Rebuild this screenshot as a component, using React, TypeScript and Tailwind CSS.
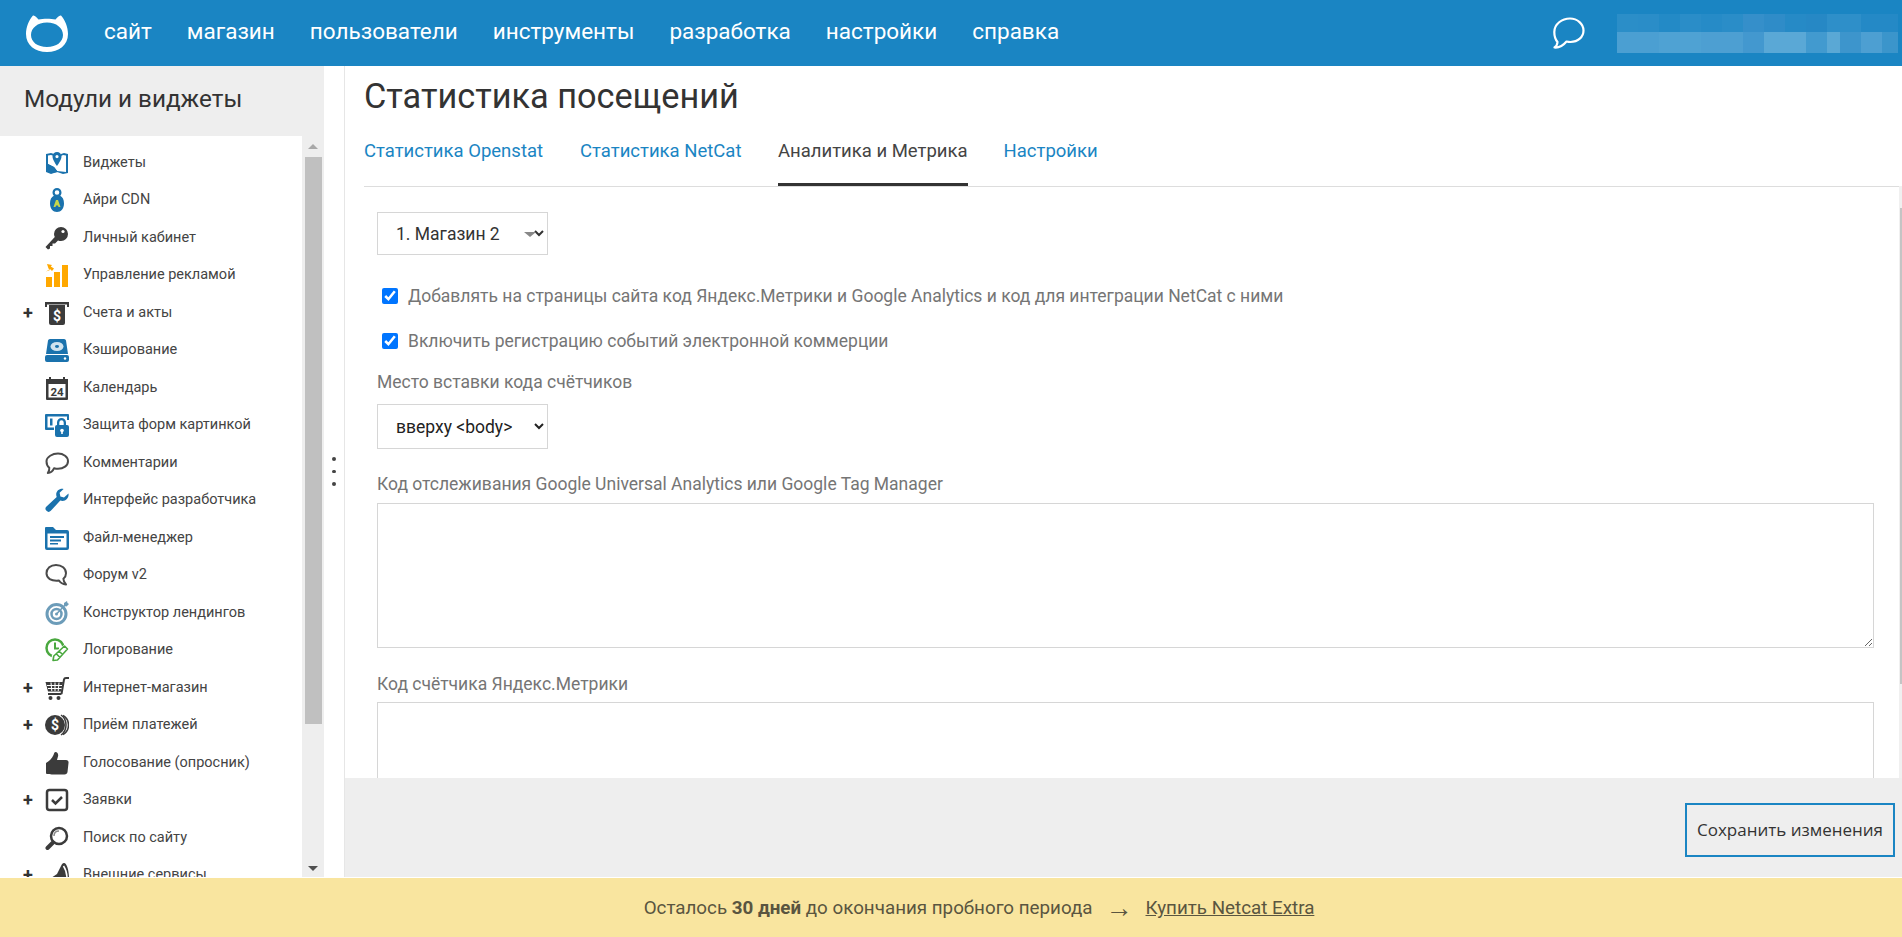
import type { ReactNode } from "react";

const BLUE = "#1a72ad";
const DARK = "#3b3b3b";

function Svg({ children }: { children: ReactNode }) {
  return (
    <svg viewBox="0 0 24 24" className="h-6 w-6 shrink-0">
      {children}
    </svg>
  );
}

const icons: Record<string, ReactNode> = {
  map: (
    <Svg>
      <path fill={BLUE} fillRule="evenodd" d="M1 3l5-1 3 1v2L6 4 3 4.600V13l6 3 3 4 9 1V4.600L18 4l-2 1V3l3-1 4 1v19l-5 1-6-2-6 2-5-2Z" />
      <path fill={BLUE} d="M3 13l6 3 4 5-6 1-4-2Z" />
      <path fill={BLUE} fillRule="evenodd" d="M12 1a4.500 4.500 0 0 1 4.500 4.500C16.500 9 12 15 12 15S7.500 9 7.500 5.500A4.500 4.500 0 0 1 12 1Zm0 3a1.600 1.600 0 1 0 0 3.200A1.600 1.600 0 0 0 12 4Z" />
    </Svg>
  ),
  lock: (
    <Svg>
      <path fill={BLUE} fillRule="evenodd" d="M12 0a4.500 4.500 0 0 1 4.500 4.500c0 1.300-.5 2.500-1.300 3.300C17.600 9 19 11.500 19 15.500c0 5-3 8.500-7 8.500s-7-3.500-7-8.500c0-4 1.400-6.500 3.800-7.700a4.500 4.500 0 0 1-1.300-3.300A4.500 4.500 0 0 1 12 0Zm0 2.200a2.300 2.300 0 0 0 0 4.600 2.300 2.300 0 0 0 0-4.600Z" />
      <path fill="#c9d84a" d="M11 12h2l2.500 7h-2l-.5-1.500h-2L10.500 19h-2Z" />
    </Svg>
  ),
  key: (
    <Svg>
      <path fill={DARK} d="M16 1a7 7 0 0 1 0 14c-1 0-2-.2-3-.6L10 17.500H7.500V20H5v2.500l-2 1L.5 21 9.800 11c-.5-1-.8-2-.8-3a7 7 0 0 1 7-7Z" />
      <circle cx="18" cy="5.500" r="1.600" fill="#fff" />
    </Svg>
  ),
  bars: (
    <Svg>
      <path fill="#ffa800" d="M1 14h6v10H1ZM9 9h6v15H9ZM17 2h6v22h-6Z" />
      <path fill="#ffa800" d="M1 8.500 5 7 3.500 5.500 2 1l5 1-1.200 1.400L9 5.500 7 8 5 6Z" />
    </Svg>
  ),
  invoice: (
    <Svg>
      <path fill={DARK} d="M0 1h24v5h-2V3.500H2V6H0Z" />
      <path fill={DARK} d="M4 4h16v18a2 2 0 0 1-2 2H6a2 2 0 0 1-2-2Z" />
      <text x="12" y="20" textAnchor="middle" fontSize="14" fontWeight="700" fontFamily="Roboto, sans-serif" fill="#fff">$</text>
    </Svg>
  ),
  disk: (
    <Svg>
      <path fill={BLUE} d="M5 1h14a2 2 0 0 1 2 1.600L23 16H1L3 2.600A2 2 0 0 1 5 1ZM2 17h20a2 2 0 0 1 2 2v3a2 2 0 0 1-2 2H2a2 2 0 0 1-2-2v-3a2 2 0 0 1 2-2Z" />
      <ellipse cx="12" cy="8.500" rx="6.500" ry="4.500" fill="#cfe3ef" />
      <ellipse cx="12" cy="8.500" rx="2" ry="1.400" fill={BLUE} />
      <circle cx="20" cy="20.500" r="1.200" fill="#fff" />
    </Svg>
  ),
  calendar: (
    <Svg>
      <path fill={DARK} fillRule="evenodd" d="M1 3h3V1h2v2h12V1h2v2h3v20a1 1 0 0 1-1 1H2a1 1 0 0 1-1-1ZM3.500 8v13.500h17V8Z" />
      <text x="12" y="19.500" textAnchor="middle" fontSize="11.500" fontWeight="700" fontFamily="Roboto, sans-serif" fill={DARK}>24</text>
    </Svg>
  ),
  captcha: (
    <Svg>
      <path fill={BLUE} fillRule="evenodd" d="M1 1h22a1 1 0 0 1 1 1v5h-2V3.500H2.500v11H9V17H1a1 1 0 0 1-1-1V2a1 1 0 0 1 1-1Z" />
      <path fill={BLUE} d="M5 5.500h2.500v7H5Z" />
      <path fill={BLUE} fillRule="evenodd" d="M16.500 5A4.500 4.500 0 0 1 21 9.500V12h-2.300V9.500a2.200 2.200 0 0 0-4.400 0V12H22a2 2 0 0 1 2 2v8a2 2 0 0 1-2 2H12a2 2 0 0 1-2-2v-8a2 2 0 0 1 2-2V9.500A4.500 4.500 0 0 1 16.500 5Z" />
      <circle cx="17" cy="17.500" r="1.800" fill="#fff" />
      <path fill="#fff" d="M16.200 18h1.600v3h-1.600Z" />
    </Svg>
  ),
  comment: (
    <Svg>
      <path fill="none" stroke="#4a4a4a" strokeWidth="2" strokeLinejoin="round" d="M13 2.500c5.500 0 10 3.400 10 7.700s-4.500 7.600-10 7.600c-1.400 0-2.700-.2-3.900-.6C8 19.800 5.500 22 2.800 22c1.200-1.500 1.700-3.300 1.500-5.300C2.300 15.200 1.500 12.700 1.500 10.200 1.500 5.900 7.500 2.500 13 2.500Z" />
    </Svg>
  ),
  wrench: (
    <Svg>
      <path fill={BLUE} d="M23.500 5.500c.6 3.800-2 7.500-6 7.500-.8 0-1.500-.1-2.200-.4L5.800 22.800a3 3 0 0 1-4.300 0 3 3 0 0 1 0-4.300L11.700 9c-.3-.7-.5-1.500-.5-2.400 0-4 3.700-6.400 7.400-5.600l-4 3.700.8 3.800 3.600.9Z" />
    </Svg>
  ),
  folder: (
    <Svg>
      <path fill={BLUE} fillRule="evenodd" d="M1 1h7l3 3h11a2 2 0 0 1 2 2v16a2 2 0 0 1-2 2H2a2 2 0 0 1-2-2V2a1 1 0 0 1 1-1Zm1.500 6.500V21.500h19V7.500Z" />
      <path fill={BLUE} d="M5 10h14v2H5ZM5 13.500h11v2H5ZM5 17h8v1.500H5Z" />
    </Svg>
  ),
  forum: (
    <Svg>
      <path fill="none" stroke="#4a4a4a" strokeWidth="2" strokeLinejoin="round" d="M11 2c5.700 0 10 3.500 10 8.300 0 2.400-1 4.200-2.600 5.500 0 1.800.8 3.700 2.600 5.700-3-.3-5.600-1.800-7-4C6 18.300 1.500 15.200 1.500 10.300 1.500 5.500 5.500 2 11 2Z" />
    </Svg>
  ),
  target: (
    <Svg>
      <circle cx="11.500" cy="13" r="9.500" fill="none" stroke="#6c9cb9" strokeWidth="3" />
      <circle cx="11.500" cy="13" r="5" fill="none" stroke="#6c9cb9" strokeWidth="2.500" />
      <circle cx="11.500" cy="13" r="1.500" fill="#6c9cb9" />
      <path stroke="#6c9cb9" strokeWidth="1.500" d="M12 12.500 21 3" />
      <path fill="#6c9cb9" d="M19 2l3-2 .5 2L24 3l-2.500 2.500L19 5Z" />
    </Svg>
  ),
  log: (
    <Svg>
      <circle cx="10" cy="10" r="8.500" fill="none" stroke="#4aa83f" strokeWidth="2.500" />
      <path fill="none" stroke="#4aa83f" strokeWidth="2" d="M10 4.500V10.500H14" />
      <path fill="#fff" d="M20 6l4 4-12 14-6-1 1-6Z" />
      <path fill="none" stroke="#4aa83f" strokeWidth="1.600" strokeLinejoin="round" d="M19.500 8l3 3-10 11-4.500.5.800-4.500ZM11 15.500l4 4M14 13l3.500 3.500" />
    </Svg>
  ),
  cart: (
    <Svg>
      <path fill={DARK} d="M.5 6h17.500l-2 9.500H3Zm2.500 11h13.500v2H3Z" />
      <path stroke={DARK} strokeWidth="2" fill="none" d="M16.500 18 19 3.500c.2-1 1-1.500 2-1.500h3" />
      <path stroke="#fff" strokeWidth="1" d="M6 6.500l.8 8.500M10 6.500V15M14 6.500l-.8 8.500M2 9.500h15M3 12.500h13.500" />
      <circle cx="5.500" cy="22" r="2" fill={DARK} />
      <circle cx="13.500" cy="22" r="2" fill={DARK} />
    </Svg>
  ),
  payment: (
    <Svg>
      <path fill="none" stroke={DARK} strokeWidth="1.500" d="M18 2.500c3.500 2 5.500 5.500 5.500 9.500s-2 7.500-5.500 9.500" />
      <path fill="none" stroke={DARK} strokeWidth="1.500" d="M16 2c3 2 5 5.500 5 10s-2 8-5 10" />
      <circle cx="10" cy="12" r="10" fill={DARK} />
      <text x="10" y="17" textAnchor="middle" fontSize="14" fontWeight="700" fontFamily="Roboto, sans-serif" fill="#fff">$</text>
    </Svg>
  ),
  thumb: (
    <Svg>
      <path fill={DARK} d="M1 12c3-1.500 6-4.500 7.500-8 .5-1.500.8-3 2-3 2 0 3 2 2.600 4L12 9h9c2 0 2.800 1.500 2.500 3l-1 9c-.2 1.500-1.300 2.500-3 2.500H8c-2 0-3-.5-4.500-.5H2a1 1 0 0 1-1-1Z" />
    </Svg>
  ),
  check: (
    <Svg>
      <rect x="2" y="2" width="20" height="20" rx="2.500" fill="none" stroke={DARK} strokeWidth="2.500" />
      <path fill="none" stroke={DARK} strokeWidth="2.500" d="M7 12l3.500 3.500L17 9" />
    </Svg>
  ),
  search: (
    <Svg>
      <circle cx="14" cy="10" r="8" fill="none" stroke={DARK} strokeWidth="2.500" />
      <path fill="none" stroke="#8a8a8a" strokeWidth="1.500" d="M9 10c0-3 2-5 5-5" />
      <path stroke={DARK} strokeWidth="4" strokeLinecap="round" d="M8 16.500 2.500 22" />
    </Svg>
  ),
  megaphone: (
    <Svg>
      <path fill={DARK} d="M0 19 12 11l4-8c.6-1.500 1.500-3 3-3 3 0 5 8 5 15 0 4-.5 8-1.500 9H4l-2-1Z" />
      <path fill="none" stroke="#fff" strokeWidth="1.500" d="M18.500 3c2 3 3.500 7.500 3.500 12 0 1.500-.2 3-.6 4" />
    </Svg>
  ),
};

const modules = [
  { title: "Виджеты", icon: "map" },
  { title: "Айри CDN", icon: "lock" },
  { title: "Личный кабинет", icon: "key" },
  { title: "Управление рекламой", icon: "bars" },
  { title: "Счета и акты", icon: "invoice", plus: true },
  { title: "Кэширование", icon: "disk" },
  { title: "Календарь", icon: "calendar" },
  { title: "Защита форм картинкой", icon: "captcha" },
  { title: "Комментарии", icon: "comment" },
  { title: "Интерфейс разработчика", icon: "wrench" },
  { title: "Файл-менеджер", icon: "folder" },
  { title: "Форум v2", icon: "forum" },
  { title: "Конструктор лендингов", icon: "target" },
  { title: "Логирование", icon: "log" },
  { title: "Интернет-магазин", icon: "cart", plus: true },
  { title: "Приём платежей", icon: "payment", plus: true },
  { title: "Голосование (опросник)", icon: "thumb" },
  { title: "Заявки", icon: "check", plus: true },
  { title: "Поиск по сайту", icon: "search" },
  { title: "Внешние сервисы", icon: "megaphone", plus: true },
];

const navItems = ["сайт", "магазин", "пользователи", "инструменты", "разработка", "настройки", "справка"];

function ModuleRow({ title, icon, plus }: { title: string; icon: string; plus?: boolean }) {
  return (
    <div className="flex h-[37.5px] shrink-0 items-center pl-[23px]">
      <span className="w-[22px] text-[18px] leading-none font-bold text-[#333]">{plus ? "+" : ""}</span>
      {icons[icon]}
      <span className="ml-[14px] text-[14.5px] whitespace-nowrap text-[#444]">{title}</span>
    </div>
  );
}

function Field({ children }: { children: ReactNode }) {
  return <div className="text-[17.5px] leading-6 text-[#757575]">{children}</div>;
}

export default function App() {
  return (
    <div className="flex h-[937px] w-[1902px] flex-col overflow-hidden bg-white font-['Roboto',sans-serif]">
      <header className="flex h-[66px] shrink-0 items-center bg-[#1a85c3] pr-1 pl-[26px] text-white">
        <svg viewBox="0 0 42 37" className="h-[37px] w-[42px] shrink-0">
          <path
            fill="#fff"
            fillRule="evenodd"
            d="M7 .5C9 0 11 3 12.500 4.500c5-1 12-1 17 0C31 3 33 0 35 .5 39 5 42 12 42 19c0 11-9 18-21 18S0 30 0 19C0 12 3 5 7 .5ZM21 7.500C11.500 7.500 5 13 5 20s6.500 12 16 12 16-5 16-12S30.500 7.500 21 7.500Z"
          />
        </svg>
        <nav className="mb-[2px] ml-[36px] flex gap-[35px] text-[22.5px] font-normal">
          {navItems.map((item) => (
            <span key={item}>{item}</span>
          ))}
        </nav>
        <svg viewBox="0 0 32 32" className="mr-[32px] ml-auto h-8 w-8 shrink-0">
          <path
            fill="none"
            stroke="#fff"
            strokeWidth="2.200"
            strokeLinejoin="round"
            d="M17 1.500C24.500 1.500 30.500 7 30.500 13.500S25 25 17.500 25c-1.400 0-2.700-.2-4-.5C11 27.500 6.500 31 1.500 30.500c1.500-1 2.800-2.800 3-5.500-2.200-2.500-3.200-6-3.200-10C1.300 7 9 1.500 17 1.500Z"
          />
        </svg>
        <div className="flex h-[39px] w-[281px] shrink-0 flex-col">
          <div className="flex h-[18px]">
            <span className="w-[21px] bg-[#2b8ec8]" />
            <span className="w-[21px] bg-[#2a8dc8]" />
            <span className="w-[21px] bg-[#238ac6]" />
            <span className="w-[21px] bg-[#2a8dc8]" />
            <span className="w-[21px] bg-[#268bc7]" />
            <span className="w-[21px] bg-[#2a8dc8]" />
            <span className="w-[21px] bg-[#358fca]" />
            <span className="w-[21px] bg-[#2f8cc8]" />
            <span className="w-[21px] bg-[#268ac6]" />
            <span className="w-[21px] bg-[#2688c5]" />
            <span className="w-[34px] bg-[#2e8fc9]" />
            <span className="w-[37px] bg-[#2489c6]" />
          </div>
          <div className="flex h-[21px]">
            <span className="w-[42px] bg-[#4b9fd2]" />
            <span className="w-[42px] bg-[#4fa2d3]" />
            <span className="w-[42px] bg-[#4d9fd2]" />
            <span className="w-[21px] bg-[#4398cf]" />
            <span className="w-[42px] bg-[#5aa8d6]" />
            <span className="w-[21px] bg-[#429acf]" />
            <span className="w-[13px] bg-[#5aa8d5]" />
            <span className="w-[21px] bg-[#3d95cc]" />
            <span className="w-[21px] bg-[#4d9fd2]" />
            <span className="w-[16px] bg-[#3b95cb]" />
          </div>
        </div>
      </header>

      <div className="flex min-h-0 flex-1">
        <aside className="flex w-[324px] shrink-0 flex-col bg-[#eeeeee]">
          <div className="flex h-[70px] shrink-0 items-center pb-1 pl-6 text-[24.3px] text-[#333]">Модули и виджеты</div>
          <div className="flex min-h-0 flex-1">
            <div className="flex w-[302px] flex-col overflow-hidden bg-white pt-[8px]">
              {modules.map((m) => (
                <ModuleRow key={m.title} title={m.title} icon={m.icon} plus={m.plus} />
              ))}
            </div>
            <div className="flex w-[22px] flex-col items-center pt-[8px] pb-[6px]">
              <span className="h-0 w-0 border-x-[5px] border-b-[5px] border-x-transparent border-b-[#a8a8a8]" />
              <span className="mt-[8px] h-[567px] w-[17px] bg-[#c0c0c0]" />
              <span className="mt-auto h-0 w-0 border-x-[5px] border-t-[5px] border-x-transparent border-t-[#505050]" />
            </div>
          </div>
        </aside>

        <div className="flex w-[20px] shrink-0 flex-col items-center justify-center gap-[9px]">
          <span className="h-[3.500px] w-[3.500px] rounded-full bg-[#444]" />
          <span className="h-[3.500px] w-[3.500px] rounded-full bg-[#444]" />
          <span className="h-[3.500px] w-[3.500px] rounded-full bg-[#444]" />
        </div>

        <main className="flex min-w-0 flex-1 flex-col border-l border-[#e6e6e6]">
          <div className="flex min-h-0 flex-1">
            <div className="min-w-0 flex-1 overflow-hidden pt-[11px] pl-[19px]">
              <h1 className="text-[34.3px] leading-[38px] text-[#333]">Статистика посещений</h1>
              <div className="mt-[23px] flex border-b border-[#dddddd] pt-[1px] text-[18.5px] leading-6 text-[#1a85c3]">
                <span className="pb-[23px]">Статистика Openstat</span>
                <span className="ml-[37px] pb-[23px]">Статистика NetCat</span>
                <span className="ml-[36.500px] border-b-[3px] border-[#333] pb-[20px] text-[#444]">Аналитика и Метрика</span>
                <span className="ml-[36px] pb-[23px]">Настройки</span>
              </div>
              <div className="pl-[13px]">
                <div className="relative mt-[25px] w-[171px]">
                  <select className="block h-[43px] w-[171px] appearance-auto border border-[#d6d6d6] bg-white pl-[14px] text-[17.5px] text-[#333]">
                    <option>1. Магазин 2</option>
                  </select>
                  <span className="absolute top-[20px] right-[12px] h-0 w-0 border-x-[6px] border-t-[5px] border-x-transparent border-t-[#888]" />
                </div>
                <label className="mt-[29px] flex h-6 items-center">
                  <input type="checkbox" defaultChecked className="ml-[5px] h-4 w-4 appearance-auto" />
                  <span className="ml-[10px] text-[17.5px] text-[#757575]">
                    Добавлять на страницы сайта код Яндекс.Метрики и Google Analytics и код для интеграции NetCat с ними
                  </span>
                </label>
                <label className="mt-[21px] flex h-6 items-center">
                  <input type="checkbox" defaultChecked className="ml-[5px] h-4 w-4 appearance-auto" />
                  <span className="ml-[10px] text-[17.5px] text-[#757575]">Включить регистрацию событий электронной коммерции</span>
                </label>
                <div className="mt-[17px]">
                  <Field>Место вставки кода счётчиков</Field>
                </div>
                <select className="mt-[10px] block h-[45px] w-[171px] appearance-auto border border-[#d6d6d6] bg-white pl-[14px] text-[17.5px] text-[#222]">
                  <option>вверху &lt;body&gt;</option>
                </select>
                <div className="mt-[23px]">
                  <Field>Код отслеживания Google Universal Analytics или Google Tag Manager</Field>
                </div>
                <textarea className="mt-[7px] block h-[145px] w-[1497px] border border-[#d6d6d6] bg-white" />
                <div className="mt-[24px]">
                  <Field>Код счётчика Яндекс.Метрики</Field>
                </div>
                <textarea className="mt-[6px] block h-[146px] w-[1497px] border border-[#d6d6d6] bg-white" />
              </div>
            </div>
            <div className="mt-[120px] flex w-[3px] shrink-0 justify-end bg-[#f0f0f0]">
              <span className="mt-[22px] h-[476px] w-[2px] bg-[#c4c4c4]" />
            </div>
          </div>
          <div className="flex h-[99px] shrink-0 items-start justify-end bg-[#eeeeee] pt-[25px] pr-[7px]">
            <button className="h-[54px] w-[210px] border-2 border-[#1a85c3] font-['Open_Sans',sans-serif] text-[17px] text-[#333]">
              Сохранить изменения
            </button>
          </div>
        </main>
      </div>

      <footer className="flex h-[60px] shrink-0 items-center justify-center border-t border-white bg-[#f9e59f] pt-[2px] pl-[56px] text-[18.800px] text-[#5a5540]">
        <span>
          Осталось <b className="font-bold">30 дней</b> до окончания пробного периода
        </span>
        <span className="mx-[13px] text-[27px] leading-none">→</span>
        <span className="underline">Купить Netcat Extra</span>
      </footer>
    </div>
  );
}
